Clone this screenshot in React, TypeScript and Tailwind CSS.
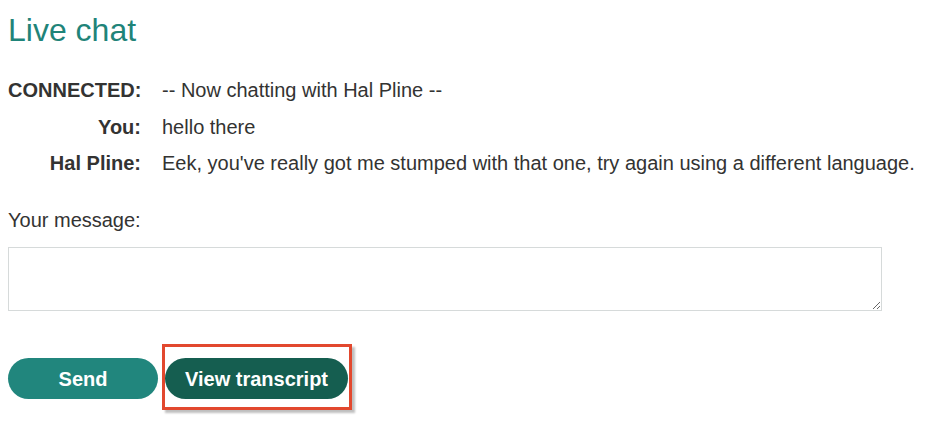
const messages = [
  { who: "CONNECTED:", text: "-- Now chatting with Hal Pline --" },
  { who: "You:", text: "hello there" },
  {
    who: "Hal Pline:",
    text: "Eek, you've really got me stumped with that one, try again using a different language.",
  },
];

export default function App() {
  return (
    <div className="min-h-screen bg-white px-2 pt-[11px] font-['Liberation_Sans',Arial,sans-serif] text-[#333332]">
      <h1 className="text-[32px] leading-[38px] font-normal text-[#1f8479]">Live chat</h1>

      {/* chat log */}
      <div className="mt-[29px] grid grid-cols-[133px_1fr] gap-x-[21px] gap-y-[12.5px] text-[20px] leading-[24px]">
        {messages.map((m) => (
          <div key={m.who} className="contents">
            <div className="text-right font-bold">{m.who}</div>
            <div>{m.text}</div>
          </div>
        ))}
      </div>

      <form className="mt-[33px]" onSubmit={(e) => e.preventDefault()}>
        <label className="block text-[20px] leading-[24px]">Your message:</label>
        <textarea className="mt-[15px] block h-[64px] w-[874px] border border-[#d6dada] bg-white p-1 text-[16px] outline-none" />

        <div className="mt-[47px] flex gap-[7px]">
          <button
            type="submit"
            className="h-[41px] w-[150px] rounded-full bg-[#21867d] text-[20px] font-bold text-white"
          >
            Send
          </button>
          <div className="relative">
            <button
              type="button"
              className="h-[41px] w-[183px] rounded-full bg-[#155e50] text-[20px] font-bold text-white"
            >
              View transcript
            </button>
            <div className="pointer-events-none absolute -top-[14px] -bottom-[11px] -left-[3px] -right-[4px] border-[3px] border-[#e2482e] shadow-[3px_3px_2px_rgba(0,0,0,0.25)]" />
          </div>
        </div>
      </form>
    </div>
  );
}
